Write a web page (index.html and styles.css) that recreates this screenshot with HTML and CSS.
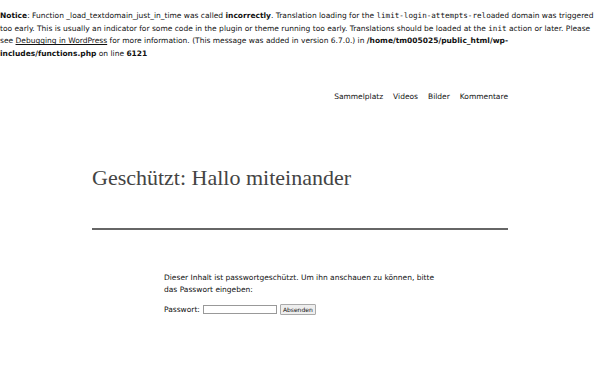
FILE: index.html
```html
<!DOCTYPE html>
<html lang="de">

<head>
    <meta charset="utf-8">
    <title>Geschützt: Hallo miteinander</title>
    <link rel="stylesheet" href="styles.css">
</head>

<body>
    <p class="notice"><b>Notice</b>: Function _load_textdomain_just_in_time was called <b>incorrectly</b>. Translation loading for the <code>limit-login-attempts-reloaded</code> domain was triggered too early. This is usually an indicator for some code in the plugin or theme running too early. Translations should be loaded at the <code>init</code> action or later. Please see <a href="#">Debugging in WordPress</a> for more information. (This message was added in version 6.7.0.) in <b>/home/tm005025/public_html/wp-includes/functions.php</b> on line <b>6121</b></p>

    <header class="site-header">
        <nav class="main-nav">
            <a href="#">Sammelplatz</a>
            <a href="#">Videos</a>
            <a href="#">Bilder</a>
            <a href="#">Kommentare</a>
        </nav>
    </header>

    <main class="wrap">
        <h1 class="entry-title">Geschützt: Hallo miteinander</h1>
        <hr class="divider">

        <div class="entry-content">
            <p>Dieser Inhalt ist passwortgeschützt. Um ihn anschauen zu können, bitte das Passwort eingeben:</p>
            <form class="post-password">
                <label for="pwbox">Passwort:</label>
                <input type="password" id="pwbox">
                <button type="button">Absenden</button>
            </form>
        </div>
    </main>
</body>

</html>
```

FILE: styles.css
```css
body {
    margin: 0;
    font-family: "DejaVu Sans", sans-serif;
    color: #111;
    background-color: #fff;
}

.notice {
    margin: 10px 0 0;
    font-size: 7.5px;
    line-height: 12.7px;
}

.notice code {
    font-family: "DejaVu Sans Mono", monospace;
    font-size: 7.6px;
}

.notice a {
    color: #111;
}

.site-header {
    display: flex;
    justify-content: flex-end;
    padding: 31px 92px 0;
}

.main-nav {
    display: flex;
    gap: 10px;
    font-size: 7.5px;
}

.main-nav a {
    color: #111;
    text-decoration: none;
}

.wrap {
    padding: 0 92px;
}

.entry-title {
    margin: 64px 0 0;
    font-family: "Liberation Serif", serif;
    font-weight: normal;
    font-size: 22px;
    line-height: 26px;
    color: #444;
}

.divider {
    margin: 37px 0 0;
    border: none;
    height: 2px;
    background-color: #666;
}

.entry-content {
    width: 272px;
    margin: 42px auto 0;
    font-size: 7.5px;
    line-height: 12px;
}

.entry-content p {
    margin: 0 0 8px;
}

.post-password {
    display: flex;
    align-items: center;
    gap: 3px;
}

.post-password input {
    width: 70px;
    height: 7px;
    padding: 0 1px;
    border: 1px solid #999;
    font-size: 6px;
}

.post-password button {
    font-family: "DejaVu Sans", sans-serif;
    font-size: 6px;
    padding: 1px 2px;
    border: 1px solid #aaa;
    border-radius: 1px;
    background-color: #eee;
    color: #111;
}
```
